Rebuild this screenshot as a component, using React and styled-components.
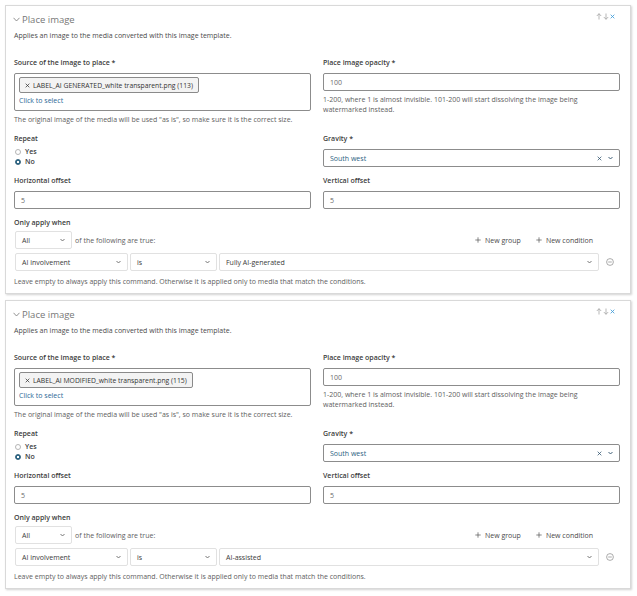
import React from "react";
import styled, { createGlobalStyle } from "styled-components";

const Global = createGlobalStyle`
  html, body { margin: 0; padding: 0; background: #fff; }
  body { font-family: "Open Sans", "Noto Sans", sans-serif; color: #333; }
`;

const Page = styled.div`
  display: flex;
  flex-direction: column;
  gap: 6px;
  padding: 5px 6px 5px 5px;
`;

const Card = styled.section`
  border: 1px solid #d9d9d9;
  box-shadow: 1px 1px 2px rgba(0, 0, 0, 0.18);
  padding: 6px 10px 6px 8px;
  background: #fff;
`;

const Header = styled.div`
  display: flex;
  align-items: center;
  justify-content: space-between;
  height: 14px;
`;

const Title = styled.div`
  display: flex;
  align-items: center;
  gap: 2px;
  font-size: 9.5px;
  color: #777;
  margin-left: -1px;
`;

const Tools = styled.div`
  display: flex;
  align-items: center;
  gap: 1px;
  margin-right: 5px;
  margin-top: -5px;
`;

const Desc = styled.p`
  margin: 5px 0 0;
  font-size: 7px;
  line-height: 10px;
  color: #4a4a4a;
`;

const FormGrid = styled.div`
  display: grid;
  grid-template-columns: 1fr 1fr;
  column-gap: 12px;
  row-gap: 9px;
  margin-top: 17px;
`;

const Field = styled.div`
  display: flex;
  flex-direction: column;
  min-width: 0;
`;

const Label = styled.div`
  font-size: 7px;
  font-weight: 600;
  line-height: 10px;
  color: #3c3c3c;
  margin-bottom: ${(p) => (p.$tight ? "3px" : "5px")};
`;

const TextBox = styled.div`
  box-sizing: border-box;
  height: 18px;
  border: 1px solid #8c8c8c;
  border-radius: 2px;
  padding: 0 6px;
  display: flex;
  align-items: center;
  font-size: 7px;
  color: #6a6a6a;
`;

const Help = styled.div`
  font-size: 7px;
  line-height: 10px;
  color: #5e5e5e;
  margin-top: ${(p) => p.$top || "4px"};
`;

const SourceBox = styled.div`
  box-sizing: border-box;
  height: 38px;
  border: 1px solid #8c8c8c;
  border-radius: 2px;
  padding: 3px 4px 0;
  display: flex;
  flex-direction: column;
  align-items: flex-start;
`;

const Chip = styled.div`
  box-sizing: border-box;
  height: 16px;
  display: inline-flex;
  align-items: center;
  gap: 3px;
  padding: 0 5px;
  border: 1px solid #8a8a8a;
  border-radius: 2px;
  background: #f3f3f3;
  font-size: 6.8px;
  color: #333;
  white-space: nowrap;
`;

const ClickSelect = styled.div`
  font-size: 7px;
  line-height: 10px;
  color: #2a6896;
  margin-top: 3px;
`;

const RadioGroup = styled.div`
  display: flex;
  flex-direction: column;
`;

const RadioRow = styled.label`
  display: flex;
  align-items: center;
  gap: 4px;
  font-size: 7px;
  font-weight: 600;
  line-height: 10px;
  color: #3c3c3c;
  padding-left: 1px;
`;

const RadioDot = styled.span`
  box-sizing: border-box;
  width: 6px;
  height: 6px;
  border-radius: 50%;
  border: 1px solid ${(p) => (p.$on ? "#2f5f7a" : "#b5b5b5")};
  background: ${(p) => (p.$on ? "radial-gradient(circle, #ffffff 0 1px, #2f6a8a 1.4px)" : "#fff")};
`;

const SelectBox = styled.div`
  box-sizing: border-box;
  height: 18px;
  border: 1px solid ${(p) => (p.$strong ? "#8c8c8c" : "#e1e1e1")};
  border-radius: 2px;
  padding: 0 6px;
  display: flex;
  align-items: center;
  gap: 6px;
  font-size: 7px;
  color: ${(p) => (p.$strong ? "#2b5f82" : "#3a3a3a")};
  background: #fff;
  width: ${(p) => p.$w || "auto"};
  flex: ${(p) => (p.$w ? "none" : "1")};
`;

const SelectText = styled.span`
  flex: 1;
  white-space: nowrap;
`;

const Conditions = styled.div`
  margin-top: 9px;
`;

const TopRow = styled.div`
  display: flex;
  align-items: center;
  justify-content: space-between;
  padding-left: 1px;
`;

const Inline = styled.div`
  display: flex;
  align-items: center;
  gap: 3px;
  font-size: 7px;
  color: #5e5e5e;
`;

const Actions = styled.div`
  display: flex;
  align-items: center;
  gap: 15px;
  margin-right: 27px;
`;

const ActionLink = styled.span`
  display: flex;
  align-items: center;
  gap: 4px;
  font-size: 7px;
  color: #4a4a4a;
`;

const CondRow = styled.div`
  display: flex;
  align-items: center;
  gap: 2px;
  margin-top: 4px;
  padding-left: 1px;
`;

const RemoveBtn = styled.span`
  display: flex;
  margin-left: 5px;
  margin-right: 6px;
`;

const Chevron = ({ color = "#777" }) => (
  <svg width="5" height="4" viewBox="0 0 5 4">
    <path d="M0.5 1 L2.5 3 L4.5 1" fill="none" stroke={color} strokeWidth="0.9" />
  </svg>
);

const Cross = ({ size = 5, color = "#444", w = 0.9 }) => (
  <svg width={size} height={size} viewBox="0 0 6 6">
    <path d="M0.8 0.8 L5.2 5.2 M5.2 0.8 L0.8 5.2" stroke={color} strokeWidth={w} fill="none" />
  </svg>
);

const Plus = () => (
  <svg width="6" height="6" viewBox="0 0 6 6">
    <path d="M3 0.3 V5.7 M0.3 3 H5.7" stroke="#555" strokeWidth="0.7" />
  </svg>
);

const Arrow = ({ down }) => (
  <svg width="6" height="7" viewBox="0 0 6 7">
    {down ? (
      <path d="M3 0.5 V6.3 M0.8 4 L3 6.3 L5.2 4" stroke="#999" strokeWidth="0.7" fill="none" />
    ) : (
      <path d="M3 6.5 V0.7 M0.8 3 L3 0.7 L5.2 3" stroke="#999" strokeWidth="0.7" fill="none" />
    )}
  </svg>
);

const MinusCircle = () => (
  <svg width="8" height="8" viewBox="0 0 8 8">
    <circle cx="4" cy="4" r="3.4" fill="none" stroke="#888" strokeWidth="0.7" />
    <path d="M2.2 4 H5.8" stroke="#888" strokeWidth="0.7" />
  </svg>
);

const Select = ({ children, w, strong, clearable }) => (
  <SelectBox $w={w} $strong={strong}>
    <SelectText>{children}</SelectText>
    {clearable && <Cross size={5} color="#2b4f6a" w={0.9} />}
    <Chevron color={strong ? "#2b4f6a" : "#666"} />
  </SelectBox>
);

const ImageCommand = ({ file, value }) => (
  <Card>
    <Header>
      <Title>
        <svg width="7" height="5" viewBox="0 0 7 5">
          <path d="M0.5 0.8 L3.5 4 L6.5 0.8" fill="none" stroke="#777" strokeWidth="0.8" />
        </svg>
        Place image
      </Title>
      <Tools>
        <Arrow />
        <Arrow down />
        <Cross size={5} color="#3d9ad8" w={1} />
      </Tools>
    </Header>
    <Desc>Applies an image to the media converted with this image template.</Desc>

    <FormGrid>
      <Field>
        <Label>Source of the image to place *</Label>
        <SourceBox>
          <Chip>
            <Cross size={5} color="#333" w={0.9} />
            {file}
          </Chip>
          <ClickSelect>Click to select</ClickSelect>
        </SourceBox>
        <Help>The original image of the media will be used "as is", so make sure it is the correct size.</Help>
      </Field>
      <Field>
        <Label>Place image opacity *</Label>
        <TextBox>100</TextBox>
        <Help>
          1-200, where 1 is almost invisible. 101-200 will start dissolving the image being
          watermarked instead.
        </Help>
      </Field>

      <Field>
        <Label $tight>Repeat</Label>
        <RadioGroup>
          <RadioRow>
            <RadioDot />
            Yes
          </RadioRow>
          <RadioRow>
            <RadioDot $on />
            No
          </RadioRow>
        </RadioGroup>
      </Field>
      <Field>
        <Label>Gravity *</Label>
        <Select strong clearable>South west</Select>
      </Field>

      <Field>
        <Label>Horizontal offset</Label>
        <TextBox>5</TextBox>
      </Field>
      <Field>
        <Label>Vertical offset</Label>
        <TextBox>5</TextBox>
      </Field>
    </FormGrid>

    <Conditions>
      <Label $tight>Only apply when</Label>
      <TopRow>
        <Inline>
          <Select w="57px">All</Select>
          of the following are true:
        </Inline>
        <Actions>
          <ActionLink>
            <Plus />
            New group
          </ActionLink>
          <ActionLink>
            <Plus />
            New condition
          </ActionLink>
        </Actions>
      </TopRow>
      <CondRow>
        <Select w="113px">AI involvement</Select>
        <Select w="87px">is</Select>
        <Select>{value}</Select>
        <RemoveBtn>
          <MinusCircle />
        </RemoveBtn>
      </CondRow>
      <Help $top="6px">
        Leave empty to always apply this command. Otherwise it is applied only to media that match the
        conditions.
      </Help>
    </Conditions>
  </Card>
);

const commands = [
  { file: "LABEL_AI GENERATED_white transparent.png (113)", value: "Fully AI-generated" },
  { file: "LABEL_AI MODIFIED_white transparent.png (115)", value: "AI-assisted" },
];

export default function App() {
  return (
    <>
      <Global />
      <Page>
        {commands.map((c) => (
          <ImageCommand key={c.file} file={c.file} value={c.value} />
        ))}
      </Page>
    </>
  );
}
